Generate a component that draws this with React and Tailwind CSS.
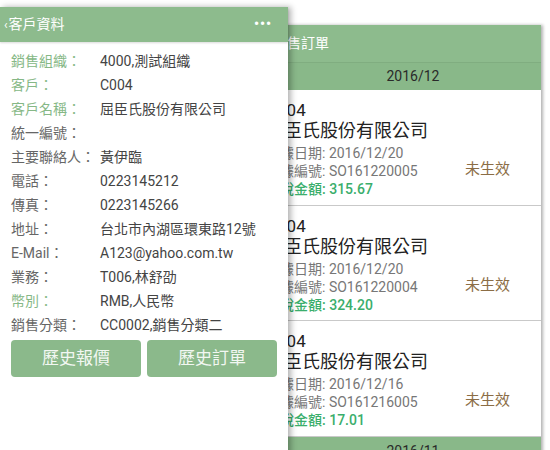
import React from 'react';

const font = { fontFamily: 'Roboto, "Noto Sans CJK TC", sans-serif' };

const fields = [
  { label: '銷售組織：', value: '4000,測試組織', green: true },
  { label: '客戶：', value: 'C004', green: true },
  { label: '客戶名稱：', value: '屈臣氏股份有限公司', green: true },
  { label: '統一編號：', value: '' },
  { label: '主要聯絡人：', value: '黃伊臨' },
  { label: '電話：', value: '0223145212' },
  { label: '傳真：', value: '0223145266' },
  { label: '地址：', value: '台北市內湖區環東路12號' },
  { label: 'E-Mail：', value: 'A123@yahoo.com.tw' },
  { label: '業務：', value: 'T006,林舒劭' },
  { label: '幣別：', value: 'RMB,人民幣', green: true },
  { label: '銷售分類：', value: 'CC0002,銷售分類二' },
];

const orders = [
  { date: '2016/12/20', no: 'SO161220005', amount: '315.67' },
  { date: '2016/12/20', no: 'SO161220004', amount: '324.20' },
  { date: '2016/12/16', no: 'SO161216005', amount: '17.01' },
];

function OrderCard({ date, no, amount }) {
  return (
    <div className="flex justify-between bg-white border-b border-[#c9c9c9] h-[116px] pl-[11px] pr-[31px] pt-[10px]">
      <div>
        <div className="text-[17px] leading-[20px] text-[#222]">C004</div>
        <div className="text-[18px] leading-[22px] text-[#222]">屈臣氏股份有限公司</div>
        <div className="mt-[2px] text-[14px] leading-[18px] text-[#777]">單據日期: {date}</div>
        <div className="text-[14px] leading-[18px] text-[#777]">單據編號: {no}</div>
        <div className="text-[14px] leading-[18px] font-medium text-[#3aae6c]">含稅金額: {amount}</div>
      </div>
      <div className="pt-[59px] text-[15px] leading-[20px] text-[#8b6d45]">未生效</div>
    </div>
  );
}

export default function App() {
  return (
    <div className="relative w-[550px] h-[450px] overflow-hidden bg-white" style={font}>
      {/* Orders screen (behind) */}
      <div className="absolute left-[255px] top-[25px] w-[286px] h-[440px] bg-white shadow-[2px_0_3px_rgba(0,0,0,0.3)] flex flex-col">
        <div className="h-[37px] bg-[#8dbb8d] flex items-center pl-[18px] text-[14px] text-white">銷售訂單</div>
        <div className="h-[28px] bg-[#89b889] border-t border-[#80ad80] flex items-center justify-center pl-[30px] text-[14px] text-[#2a2a2a]">
          2016/12
        </div>
        {orders.map((o) => (
          <OrderCard key={o.no} {...o} />
        ))}
        <div className="h-[28px] bg-[#89b889] flex items-center justify-center pl-[30px] text-[14px] text-[#2a2a2a]">
          2016/11
        </div>
      </div>

      {/* Customer screen (front) */}
      <div className="absolute left-0 top-[7px] w-[288px] h-[450px] bg-white shadow-[3px_0_6px_rgba(0,0,0,0.3)]">
        <div className="h-[35px] bg-[#8dbb8d] flex items-center justify-between pl-[4px] pr-[16px] text-white shadow-[0_1px_2px_rgba(0,0,0,0.15)]">
          <div className="flex items-center text-[14px]">
            <span className="text-[12px] mr-[1px]">‹</span>
            <span>客戶資料</span>
          </div>
          <span className="text-[14px] tracking-[1px] font-bold">•••</span>
        </div>
        <div className="pt-[7px] pl-[11px]">
          {fields.map((f) => (
            <div key={f.label} className="grid grid-cols-[89px_1fr] h-[24px] items-center text-[14px]">
              <span className={f.green ? 'text-[#86b886]' : 'text-[#666]'}>{f.label}</span>
              <span className="text-[#444]">{f.value}</span>
            </div>
          ))}
        </div>
        <div className="flex gap-[6px] px-[11px] mt-[3px]">
          <button className="w-[131px] h-[37px] rounded-[4px] bg-[#8bb98b] text-[17px] text-[#f2f7f2]">歷史報價</button>
          <button className="w-[131px] h-[37px] rounded-[4px] bg-[#8bb98b] text-[17px] text-[#f2f7f2]">歷史訂單</button>
        </div>
      </div>
    </div>
  );
}
